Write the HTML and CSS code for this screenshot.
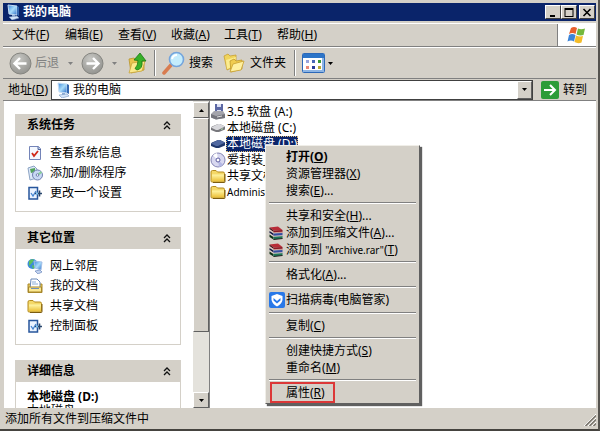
FILE: index.html
```
<!DOCTYPE html>
<html lang="zh-CN">
<head>
  <meta charset="UTF-8">
  <meta name="viewport" content="width=device-width, initial-scale=1.0">
  <title>我的电脑</title>
  <link rel="stylesheet" href="styles.css">
</head>
<body>
  <!-- 共用图标 -->
  <svg class="defs" aria-hidden="true">
    <defs>
      <linearGradient id="grad-screen" x1="0" y1="0" x2="1" y2="1">
        <stop offset="0" stop-color="#3a86dc"/><stop offset=".5" stop-color="#a8dcfa"/><stop offset="1" stop-color="#2b6cc8"/>
      </linearGradient>
      <linearGradient id="grad-folder" x1="0" y1="0" x2="0" y2="1">
        <stop offset="0" stop-color="#fff6a8"/><stop offset="1" stop-color="#ecc23c"/>
      </linearGradient>
      <radialGradient id="grad-grey" cx=".4" cy=".3" r=".8">
        <stop offset="0" stop-color="#c8c8c4"/><stop offset="1" stop-color="#8e8e8a"/>
      </radialGradient>
    </defs>
    <symbol id="i-computer" viewBox="0 0 16 16">
      <path d="M3 1l9 1v9l-8-1z" fill="url(#grad-screen)" stroke="#c4dcf4"/>
      <path d="M12 2l2 1v9l-2-1z" fill="#3468b0"/>
      <path d="M7 11h3v2H7z" fill="#8cacd4"/>
      <path d="M4 13l8-1 2 2-7 2z" fill="#d4e4f8" stroke="#7898c4" stroke-width=".6"/>
    </symbol>
    <symbol id="i-folder" viewBox="0 0 16 16">
      <path d="M1 4q0-1.500 1.500-1.500H6L7.500 4H13q1.500 0 1.500 1.500V13q0 1-1 1H2q-1 0-1-1z" fill="#f4d868" stroke="#b48a1c"/>
      <path d="M2 6.500h12V13H2z" fill="url(#grad-folder)"/>
      <path d="M3 14.500h11.500q.5 0 .5-.8V6" fill="none" stroke="#7c5c10"/>
    </symbol>
    <symbol id="i-chevrons" viewBox="0 0 8 9">
      <path d="M1 4l3-3 3 3M1 8l3-3 3 3" fill="none" stroke="#111" stroke-width="1.300"/>
    </symbol>
    <symbol id="i-down" viewBox="0 0 5 3"><path d="M0 0h5L2.500 3z" fill="currentColor"/></symbol>
    <symbol id="i-panel" viewBox="0 0 16 16">
      <path d="M2 2.500h8.500V14H2z" fill="#eaf3ff" stroke="#27569c" stroke-width="1.500"/>
      <path d="M4 8l2 3 3-5" fill="none" stroke="#4484d0" stroke-width="1.300"/>
      <path d="M8 8.500h7M12.500 5.500v6" stroke="#28466c" stroke-width="1.600"/>
      <path d="M9 8.500h2" stroke="#7cc4f0" stroke-width="2"/>
    </symbol>
    <symbol id="i-rar" viewBox="0 0 14 14">
      <path d="M.5 1.500L9 .5l4.500 3.500-9 .5z" fill="#b82c38"/>
      <path d="M.5 1.500l4 3v1.500l-4-3z" fill="#401018"/>
      <path d="M4.500 4.500l9-.5v2.500l-9 .5z" fill="#8c1824"/>
      <path d="M.5 5l4 2.500v2L.5 7z" fill="#181c48"/>
      <path d="M4.500 7.500l9-.5v2.500l-9 .5z" fill="#344ca0"/>
      <path d="M.5 8.500l4 2.500v2.500L.5 11z" fill="#103018"/>
      <path d="M4.500 10.500l9-.5v2.500l-9 1z" fill="#207858"/>
      <path d="M1 4l3.500 2.700 9-.5M1 7.500l3.500 2.700 9-.5" fill="none" stroke="#e8ccc4" stroke-width=".7"/>
      <path d="M4.500 13.500l9-1" stroke="#202020"/>
    </symbol>
    <symbol id="i-disk" viewBox="0 0 16 16">
      <path d="M1 8q0-1 1-1.500L8 4h2l5 2.500v3L9 12H6L1 10z" fill="#77777c"/>
      <path d="M1 7.500L8 4h2l5 2.500L8 10H6z" fill="#d8d8dc"/>
      <path d="M11 9.500l2-.8" stroke="#a8d8a8"/>
    </symbol>
    <symbol id="i-disk-on" viewBox="0 0 16 16">
      <path d="M1 8q0-1 1-1.500L8 4h2l5 2.500v3L9 12H6L1 10z" fill="#20386c"/>
      <path d="M1 7.500L8 4h2l5 2.500L8 10H6z" fill="#5068a0"/>
    </symbol>
  </svg>

  <div class="window">
    <header class="titlebar">
      <svg class="icon"><use href="#i-computer"/></svg>
      <h1>我的电脑</h1>
      <div class="controls">
        <button aria-label="最小化"><svg width="10" height="9" viewBox="0 0 10 9"><path d="M2 7h5v2H2z"/></svg></button>
        <button aria-label="最大化"><svg width="10" height="9" viewBox="0 0 10 9"><path d="M.5 0h9v9h-9zM1.500 2v6h7V2z" fill-rule="evenodd"/></svg></button>
        <button class="close" aria-label="关闭"><svg width="10" height="9" viewBox="0 0 10 9"><path d="M1.500 1l7 7M8.500 1l-7 7" stroke="#000" stroke-width="1.600"/></svg></button>
      </div>
    </header>

    <nav class="menubar">
      <button>文件(<u>F</u>)</button>
      <button>编辑(<u>E</u>)</button>
      <button>查看(<u>V</u>)</button>
      <button>收藏(<u>A</u>)</button>
      <button>工具(<u>T</u>)</button>
      <button>帮助(<u>H</u>)</button>
      <div class="flag">
        <svg width="20" height="18" viewBox="0 0 20 18">
          <path d="M4 2q3-2 6 0L8.500 8q-3-2-6.500 0z" fill="#e8602c"/>
          <path d="M11 2.500q3 1.500 7 0L16.500 9q-3.500 1-7-.5z" fill="#74b83c"/>
          <path d="M2 9q3-2 6.500 0L7 15.500q-3-2-6.500 0z" fill="#3c84d8"/>
          <path d="M9 9.500q3.500 1.500 7 .5L14.500 16.500q-3.500 1.500-7-.5z" fill="#f4bc28"/>
        </svg>
      </div>
    </nav>

    <div class="toolbar">
      <button class="back" disabled>
        <svg width="23" height="23" viewBox="0 0 23 23"><circle cx="11.500" cy="11.500" r="10.500" fill="url(#grad-grey)" stroke="#84847f"/><path d="M17.500 11.500H6M11 6l-5.500 5.500L11 17" fill="none" stroke="#fff" stroke-width="2.400"/></svg>
        后退
        <svg class="arrow"><use href="#i-down"/></svg>
      </button>
      <button class="forward" aria-label="前进" disabled>
        <svg width="23" height="23" viewBox="0 0 23 23"><circle cx="11.500" cy="11.500" r="10.500" fill="url(#grad-grey)" stroke="#84847f"/><path d="M5.500 11.500H17M12 6l5.500 5.500L12 17" fill="none" stroke="#fff" stroke-width="2.400"/></svg>
        <svg class="arrow"><use href="#i-down"/></svg>
      </button>
      <button aria-label="向上">
        <svg width="22" height="23" viewBox="0 0 22 23">
          <path d="M2 7l5-1 2 2 8-1v11L4 21z" fill="#e8c44c" stroke="#b8942c" stroke-width=".8"/>
          <path d="M2 21l3-10 13-2-3 10z" fill="#fbe98c" stroke="#c8a43c" stroke-width=".8"/>
          <path d="M10 18q6-1 5-9h4L13 1 7 8l4 .5q0 5-3 8z" fill="#38b028" stroke="#187814" stroke-width=".8"/>
        </svg>
      </button>
      <span class="divider"></span>
      <button class="search">
        <svg width="24" height="24" viewBox="0 0 24 24">
          <path d="M9 14l-7 8" stroke="#d87c50" stroke-width="3.500" stroke-linecap="round"/>
          <circle cx="14.500" cy="8.500" r="7" fill="#c4ecfc" stroke="#74a4dc" stroke-width="1.600"/>
          <path d="M10 8q1-4 5-4" fill="none" stroke="#fff" stroke-width="2"/>
        </svg>
        搜索
      </button>
      <button class="folders">
        <svg width="22" height="21" viewBox="0 0 22 21">
          <path d="M1 3l4-2 2 2 6-1v11l-9 4z" fill="#f0d45c" stroke="#c8a030" stroke-width=".8"/>
          <path d="M3 7l10-3-2 9-7 3z" fill="#fbec90"/>
          <path d="M7 8l4-2 2 2 6-1v9L8 19z" fill="#f0cc50" stroke="#c09828" stroke-width=".8"/>
          <path d="M7 19l3-8 11-3-3 9z" fill="#fff0a0" stroke="#c8a030" stroke-width=".8"/>
        </svg>
        文件夹
      </button>
      <span class="divider"></span>
      <button class="views" aria-label="查看方式">
        <svg width="23" height="20" viewBox="0 0 23 20">
          <rect x=".5" y=".5" width="22" height="19" rx="1" fill="#fff" stroke="#2c68b8"/>
          <path d="M1 1h21v4H1z" fill="#2c74c8"/><path d="M20 5h2v14H1v-2h19z" fill="#8cb4e4"/>
          <path d="M4 7h3v3H4z" fill="#98a4dc"/><path d="M10 7h3v3h-3z" fill="#4868b8"/><path d="M16 7h3v3h-3z" fill="#389838"/>
          <path d="M4 13h3v3H4z" fill="#e88878"/><path d="M10 13h3v3h-3z" fill="#283c98"/><path d="M16 13h3v3h-3z" fill="#b8a838"/>
        </svg>
        <svg class="arrow"><use href="#i-down"/></svg>
      </button>
    </div>

    <div class="addressbar">
      <label for="address">地址(<u>D</u>)</label>
      <div class="combo">
        <svg class="icon"><use href="#i-computer"/></svg>
        <input type="text" id="address" value="我的电脑">
        <button aria-label="展开"><svg class="arrow"><use href="#i-down"/></svg></button>
      </div>
      <button class="go">
        <svg width="18" height="18" viewBox="0 0 18 18"><rect width="18" height="18" rx="2" fill="#2c9c38"/><path d="M3 9h11M9 4l5 5-5 5" fill="none" stroke="#fff" stroke-width="2"/></svg>
        转到
      </button>
    </div>

    <main class="content">
      <aside class="sidebar">
        <section class="group">
          <button class="group-head">系统任务<svg class="chevrons"><use href="#i-chevrons"/></svg></button>
          <div class="group-body">
            <a href="#"><svg class="icon" viewBox="0 0 16 16"><path d="M2.500 1.500h9l2 2v11h-11z" fill="#f4f8ff" stroke="#7484b8"/><path d="M11 1.500v3h3" fill="#bccce8" stroke="#5468a0"/><path d="M5 8l2 3 4-5" fill="none" stroke="#d02818" stroke-width="1.800"/></svg>查看系统信息</a>
            <a href="#"><svg class="icon" viewBox="0 0 16 16"><path d="M1 3l6-2 3 3v9l-7 2z" fill="#dce8f8" stroke="#8ca4c4"/><path d="M3 4l5-1v4L4 8z" fill="#54a45c"/><circle cx="10.500" cy="10" r="5" fill="#c8d8f4" stroke="#7080b0"/><path d="M10.500 10l4-3" stroke="#88d098" stroke-width="2"/><circle cx="10.500" cy="10" r="1.300" fill="#fff" stroke="#7080b0"/></svg>添加/删除程序</a>
            <a href="#"><svg class="icon"><use href="#i-panel"/></svg>更改一个设置</a>
          </div>
        </section>
        <section class="group">
          <button class="group-head">其它位置<svg class="chevrons"><use href="#i-chevrons"/></svg></button>
          <div class="group-body">
            <a href="#"><svg class="icon" viewBox="0 0 16 16"><circle cx="5.500" cy="6" r="5" fill="#3c8cd8"/><path d="M2 3q3-3 5-1L5 5 2 8zM5 7l4 1-3 3z" fill="#5cc05c"/><path d="M7 3l8 1-1 8-6-2z" fill="url(#grad-screen)" stroke="#a4c0e8"/><path d="M8 13l5-1 2 2-4 2z" fill="#c4d4f0" stroke="#5878b4" stroke-width=".6"/></svg>网上邻居</a>
            <a href="#"><svg class="icon" viewBox="0 0 16 16"><path d="M1 6h14v8.500H1z" fill="#f0cc50" stroke="#a8882c"/><path d="M4 1h6l3 3v7H3z" fill="#fff" stroke="#6888b8"/><path d="M5 4h4M5 6h6" stroke="#88acd8"/><path d="M1.500 9h13v5h-13z" fill="#fbe890" stroke="#a8882c"/><path d="M4 10.500h8" stroke="#7090bc"/></svg>我的文档</a>
            <a href="#"><svg class="icon"><use href="#i-folder"/></svg>共享文档</a>
            <a href="#"><svg class="icon"><use href="#i-panel"/></svg>控制面板</a>
          </div>
        </section>
        <section class="group">
          <button class="group-head">详细信息<svg class="chevrons"><use href="#i-chevrons"/></svg></button>
          <div class="group-body details">
            <b>本地磁盘 (D:)</b>
            <span>本地磁盘</span>
          </div>
        </section>
      </aside>

      <div class="scrollbar">
        <button class="up" aria-label="向上滚动"><svg class="arrow"><use href="#i-down"/></svg></button>
        <div class="thumb"></div>
        <div class="track"></div>
        <button aria-label="向下滚动"><svg class="arrow"><use href="#i-down"/></svg></button>
      </div>

      <ul class="files">
        <li><svg class="icon" viewBox="0 0 16 16"><path d="M5 0h8v9H5z" fill="#5c68a4"/><path d="M7 0h4v3H7zM7 6h4v3H7z" fill="#dce0f4"/><path d="M1 10l3-3h9l2 3v4l-9 1.500-5-2z" fill="#a4a4ac"/><path d="M1 10l5 2 9-2v4l-9 1.500-5-2z" fill="#74747c"/><path d="M7 13l5-1" stroke="#ddd"/></svg><span>3.5 软盘 (A:)</span></li>
        <li><svg class="icon"><use href="#i-disk"/></svg><span>本地磁盘 (C:)</span></li>
        <li class="selected"><svg class="icon"><use href="#i-disk-on"/></svg><span>本地磁盘 (D:)</span></li>
        <li><svg class="icon" viewBox="0 0 16 16"><circle cx="8" cy="8" r="7" fill="#d8d8f0" stroke="#8484b4"/><path d="M8 8L3 3.500A7 7 0 0 1 7 1z" fill="#fff"/><path d="M8 8l5 4.500A7 7 0 0 1 9 15z" fill="#b4b8e4"/><circle cx="8" cy="8" r="2" fill="#fff" stroke="#5c5ca0"/></svg><span>爱封装_</span></li>
        <li><svg class="icon"><use href="#i-folder"/></svg><span>共享文档</span></li>
        <li><svg class="icon"><use href="#i-folder"/></svg><span><small>Administ</small></span></li>
      </ul>
    </main>

    <footer class="statusbar">
      <span>添加所有文件到压缩文件中</span>
      <svg width="12" height="12" viewBox="0 0 12 12"><path d="M0 12L12 0M4 12l8-8M8 12l4-4" stroke="#fff"/><path d="M1.500 12L12 1.500M5.500 12L12 5.500M9.500 12L12 9.500" stroke="#77736b" stroke-width="1.500"/></svg>
    </footer>

    <!-- 右键菜单 -->
    <div class="context-menu" role="menu">
      <button role="menuitem"><b>打开(<u>O</u>)</b></button>
      <button role="menuitem">资源管理器(<u>X</u>)</button>
      <button role="menuitem">搜索(<u>E</u>)...</button>
      <hr>
      <button role="menuitem">共享和安全(<u>H</u>)...</button>
      <button role="menuitem"><svg class="icon"><use href="#i-rar"/></svg>添加到压缩文件(<u>A</u>)...</button>
      <button role="menuitem"><svg class="icon"><use href="#i-rar"/></svg>添加到&nbsp;<small>"Archive.rar"</small>(<u>T</u>)</button>
      <hr>
      <button role="menuitem">格式化(<u>A</u>)...</button>
      <hr>
      <button role="menuitem" class="scan"><svg class="icon" viewBox="0 0 16 16"><rect width="16" height="16" rx="2" fill="#2878e8"/><path d="M2.500 4L8 2l5.500 2v4q-1 4-5.500 6.500Q3.500 12 2.500 8z" fill="#fff"/><path d="M4.500 6L8 9l3.500-3v2.500L8 11.500 4.500 8.500z" fill="#2878e8"/></svg>扫描病毒(电脑管家)</button>
      <hr>
      <button role="menuitem">复制(<u>C</u>)</button>
      <hr>
      <button role="menuitem">创建快捷方式(<u>S</u>)</button>
      <button role="menuitem">重命名(<u>M</u>)</button>
      <hr>
      <button role="menuitem" class="marked">属性(<u>R</u>)</button>
    </div>
  </div>
</body>
</html>
```
FILE: styles.css
```
* {
  margin: 0;
  padding: 0;
  box-sizing: border-box;
}

body {
  font-family: "Noto Sans", "Noto Sans CJK SC", sans-serif;
  font-size: 12px;
  line-height: 16px;
  color: #000;
  background: #d4d0c8;
}

button,
input {
  font: inherit;
  color: inherit;
  border: none;
  background: none;
}

button {
  display: flex;
  align-items: center;
  white-space: nowrap;
}

a {
  color: inherit;
  text-decoration: none;
}

u {
  text-underline-offset: 1px;
}

small {
  font-size: 10px;
}

svg {
  flex: none;
}

.defs {
  position: absolute;
  width: 0;
  height: 0;
}

.icon {
  width: 16px;
  height: 16px;
}

.arrow {
  width: 5px;
  height: 3px;
}

.window {
  position: relative;
  display: flex;
  flex-direction: column;
  height: 100vh;
  padding: 3px 2px 0 3px;
  border-right: 2px solid #55534f;
  border-bottom: 2px solid #45433f;
  overflow: hidden;
}

/* 标题栏 */
.titlebar {
  display: flex;
  align-items: center;
  height: 18px;
  padding: 0 1px 0 2px;
  background: #0a246a;
  color: #fff;
}

.titlebar h1 {
  flex: 1;
  margin-left: 2px;
  font-size: 12px;
}

.controls {
  display: flex;
}

.controls button {
  justify-content: center;
  width: 16px;
  height: 14px;
  background: #d4d0c8;
  border: 1px solid;
  border-color: #fff #404040 #404040 #fff;
}

.controls .close {
  margin-left: 2px;
}

/* 菜单栏 */
.menubar {
  display: flex;
  height: 24px;
  margin-top: 2px;
  padding-left: 1px;
  border-top: 1px solid #fff;
  border-bottom: 1px solid #808080;
}

.menubar button {
  width: 53px;
  padding-left: 8px;
}

.flag {
  display: flex;
  align-items: center;
  justify-content: center;
  width: 39px;
  margin-left: auto;
  background: #fff;
  border-left: 1px solid #808080;
}

/* 工具栏 */
.toolbar {
  display: flex;
  align-items: center;
  height: 31px;
  padding-left: 6px;
  border-top: 1px solid #fff;
}

.toolbar button {
  gap: 3px;
}

.toolbar .back,
.toolbar .forward {
  color: #808080;
}

.toolbar .back {
  width: 72px;
}

.toolbar .back .arrow {
  margin-left: 6px;
}

.toolbar .forward {
  width: 46px;
  gap: 8px;
}

.divider {
  width: 2px;
  height: 26px;
  margin: 0 6px 0 5px;
  border-left: 1px solid #808080;
  border-right: 1px solid #fff;
}

.toolbar .search {
  width: 61px;
}

.toolbar .folders {
  width: 66px;
  gap: 5px;
}

/* 地址栏 */
.addressbar {
  display: flex;
  align-items: center;
  height: 23px;
  padding-left: 5px;
  border-top: 1px solid #808080;
  border-bottom: 1px solid #808080;
}

.addressbar label {
  width: 43px;
}

.combo {
  display: flex;
  flex: 1;
  align-items: center;
  height: 20px;
  padding-left: 3px;
  background: #fff;
  border: 1px solid #404040;
}

.combo input {
  flex: 1;
  min-width: 0;
  margin-left: 2px;
}

.combo button,
.scrollbar button {
  justify-content: center;
  width: 15px;
  height: 18px;
  background: #d4d0c8;
  border: 1px solid;
  border-color: #fff #606060 #606060 #fff;
}

.go {
  gap: 4px;
  width: 63px;
  padding-left: 8px;
}

/* 主区域 */
.content {
  display: flex;
  flex: 1;
  min-height: 0;
  background: #fff;
}

.sidebar {
  width: 190px;
  padding: 13px 12px 0 11px;
  border-left: 1px solid #d4d0c8;
  overflow: hidden;
}

.group {
  margin-bottom: 15px;
}

.group-head {
  justify-content: space-between;
  width: 100%;
  height: 22px;
  padding: 0 10px 0 12px;
  background: #d4d0c8;
  font-weight: bold;
}

.chevrons {
  width: 8px;
  height: 9px;
}

.group-body {
  padding: 7px 11px 8px;
  border: 1px solid #d4d0c8;
  border-top: none;
}

.group-body a {
  display: flex;
  align-items: center;
  gap: 7px;
  height: 20px;
}

.details b,
.details span {
  display: block;
}

.details span {
  line-height: 12px;
}

.scrollbar {
  display: flex;
  flex-direction: column;
  width: 16px;
  padding-top: 1px;
  background: #e4e2dc;
}

.scrollbar button {
  width: 16px;
  height: 16px;
}

.scrollbar .up .arrow {
  transform: rotate(180deg);
}

.thumb {
  flex: 7;
  background: #d4d0c8;
  border: 1px solid;
  border-color: #fff #606060 #606060 #fff;
}

.track {
  flex: 2;
}

.files {
  flex: 1;
  padding-top: 3px;
  border-left: 1px solid #808080;
  list-style: none;
}

.files li {
  display: flex;
  align-items: center;
  height: 16px;
}

.files span {
  padding: 0 1px;
}

.selected span {
  background: #0a246a;
  color: #fff;
  outline: 1px dotted #d8b878;
  outline-offset: -1px;
}

/* 状态栏 */
.statusbar {
  display: flex;
  justify-content: space-between;
  height: 21px;
  padding: 3px 0 0 2px;
}

.statusbar svg {
  align-self: center;
}

/* 右键菜单 */
.context-menu {
  position: absolute;
  top: 145px;
  left: 265px;
  width: 155px;
  padding: 2px;
  background: #d4d0c8;
  border: 1px solid;
  border-color: #f0eee8 #606060 #606060 #f0eee8;
  box-shadow: 2px 2px 1px #606060;
}

.context-menu button {
  position: relative;
  width: 100%;
  height: 17px;
  padding-left: 18px;
}

.context-menu .icon {
  position: absolute;
  left: 1px;
  width: 14px;
  height: 14px;
}

.context-menu .scan {
  height: 18px;
}

.context-menu .scan .icon {
  width: 16px;
  height: 16px;
}

.context-menu hr {
  height: 2px;
  margin: 3px 1px;
  border: none;
  border-top: 1px solid #808080;
  border-bottom: 1px solid #fff;
}

/* 红框标出的菜单项 */
.context-menu .marked {
  width: 65px;
  height: 21px;
  margin: -2px 0 -2px 2px;
  padding-left: 14px;
  border: 2px solid #dc3838;
}
```
